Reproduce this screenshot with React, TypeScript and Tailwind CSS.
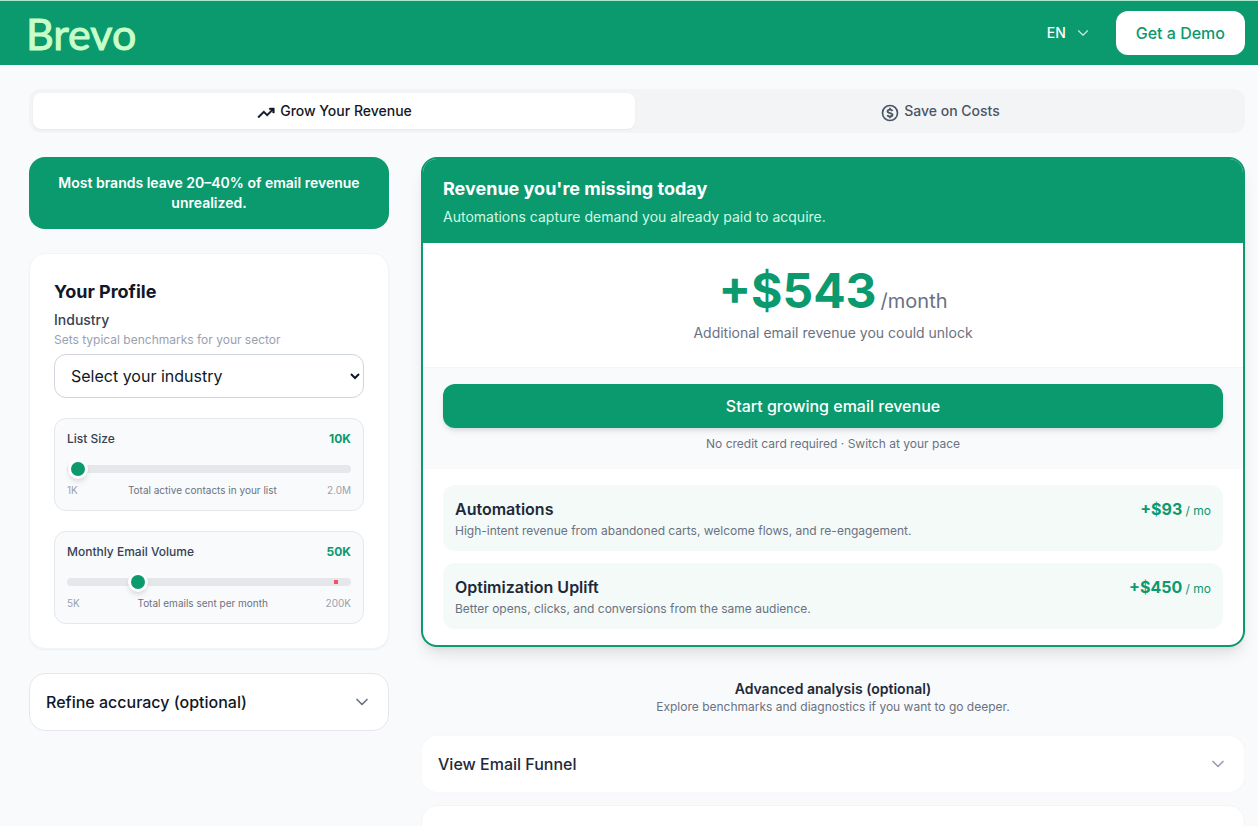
import React, { useState } from 'react';
import { ChevronDown } from 'lucide-react';

const TrendingUp = () => (
  <svg viewBox="0 0 24 24" fill="currentColor" stroke="currentColor" strokeWidth={0.5} aria-hidden="true" className="mt-1 h-5 w-5">
    <path d="M3.4 18 2 16.6l7.4-7.45 4 4L18.6 8H16V6h6v6h-2V9.4L13.4 16l-4-4Z" />
  </svg>
);

const DollarCoin = () => (
  <svg
    viewBox="0 0 24 24"
    fill="none"
    stroke="currentColor"
    strokeWidth={2}
    aria-hidden="true"
    className="mt-1 h-5 w-5"
  >
    <circle cx="12" cy="12" r="9" />
    <path
      strokeWidth={2.2}
      d="M12 5.8v2.4M12 15.8v2.4M15 9.8c-.4-1.1-1.5-1.8-3-1.8-1.7 0-2.9.8-2.9 2 0 1.300 1.100 1.700 2.900 2.100 1.900.4 3 .9 3 2.100 0 1.200-1.200 2-3 2-1.600 0-2.800-.7-3.100-1.900"
    />
  </svg>
);

type SliderProps = {
  id: string;
  label: string;
  hint: string;
  min: number;
  max: number;
  step: number;
  initial: number;
  minLabel: string;
  maxLabel: string;
  marker?: boolean;
};

const formatCount = (n: number) =>
  n >= 1000000 ? `${(n / 1000000).toFixed(1)}M` : `${Math.round(n / 1000)}K`;

const SliderField = ({ id, label, hint, min, max, step, initial, minLabel, maxLabel, marker }: SliderProps) => {
  const [value, setValue] = useState(initial);

  return (
    <div className="rounded-xl border border-gray-200 bg-[#f9fafb] p-3">
      <div className="flex items-center justify-between text-xs">
        <label htmlFor={id} className="font-medium text-gray-700">{label}</label>
        <span className="font-bold text-[#0b996e]">{formatCount(value)}</span>
      </div>
      <div className="relative mt-3 mb-1 flex h-5 items-center">
        <input
          id={id}
          type="range"
          min={min}
          max={max}
          step={step}
          value={value}
          onChange={(e) => setValue(Number(e.target.value))}
          className="h-2 w-full cursor-pointer appearance-none rounded-full bg-gray-200 outline-none [&::-webkit-slider-thumb]:h-5 [&::-webkit-slider-thumb]:w-5 [&::-webkit-slider-thumb]:appearance-none [&::-webkit-slider-thumb]:rounded-full [&::-webkit-slider-thumb]:border-3 [&::-webkit-slider-thumb]:border-white [&::-webkit-slider-thumb]:bg-[#0b996e] [&::-webkit-slider-thumb]:shadow-md"
        />
        {marker && <span className="absolute left-[94%] h-1 w-1 bg-red-500/80" />}
      </div>
      <div className="flex justify-between text-[10px] leading-[15px] text-gray-400">
        <span>{minLabel}</span>
        <span className="text-gray-500">{hint}</span>
        <span>{maxLabel}</span>
      </div>
    </div>
  );
};

const gains = [
  {
    title: 'Automations',
    description: 'High-intent revenue from abandoned carts, welcome flows, and re-engagement.',
    amount: '+$93'
  },
  {
    title: 'Optimization Uplift',
    description: 'Better opens, clicks, and conversions from the same audience.',
    amount: '+$450'
  }
];

const Header = () => (
  <header className="border-t border-[#a9e8cd] bg-[#0b996e]">
    <div className="flex h-16 items-center justify-between pr-[13px] pl-[26px]">
      <a
        href="#"
        className="font-['Lato',sans-serif] text-[43px] leading-none text-[#c8ffc8] [-webkit-text-stroke:1px_#c8ffc8]"
      >
        Brevo
      </a>
      <div className="flex items-center gap-6">
        <button type="button" className="flex items-center gap-2 text-sm font-medium text-white">
          EN
          <ChevronDown strokeWidth={1.5} className="h-[18px] w-[18px] opacity-80" />
        </button>
        <a href="#" className="rounded-xl bg-white px-5 py-[10px] font-medium text-[#0b996e]">
          Get a Demo
        </a>
      </div>
    </div>
  </header>
);

const Tabs = () => (
  <div role="tablist" className="grid grid-cols-2 gap-1 rounded-xl bg-gray-100 p-1 text-sm font-medium">
    <button
      type="button"
      role="tab"
      aria-selected="true"
      className="flex h-9 items-center justify-center gap-1 rounded-lg bg-white text-gray-900 shadow-xs"
    >
      <TrendingUp />
      Grow Your Revenue
    </button>
    <button
      type="button"
      role="tab"
      aria-selected="false"
      className="flex h-9 items-center justify-center gap-1 rounded-lg text-gray-600"
    >
      <DollarCoin />
      Save on Costs
    </button>
  </div>
);

const Profile = () => (
  <section className="rounded-2xl border border-gray-100 bg-white p-6 shadow-xs">
    <h2 className="text-lg font-bold text-gray-900">Your Profile</h2>
    <label htmlFor="industry" className="mt-1 block text-sm font-medium text-gray-700">
      Industry
    </label>
    <p className="text-xs leading-5 text-gray-400">Sets typical benchmarks for your sector</p>
    <select
      id="industry"
      className="mt-1 h-11 w-full rounded-xl border border-gray-300 bg-white px-3 text-base text-gray-900"
    >
      <option>Select your industry</option>
    </select>
    <div className="mt-5 flex flex-col gap-5">
      <SliderField
        id="list-size"
        label="List Size"
        hint="Total active contacts in your list"
        min={1000}
        max={2000000}
        step={1000}
        initial={10000}
        minLabel="1K"
        maxLabel="2.0M"
      />
      <SliderField
        id="volume"
        label="Monthly Email Volume"
        hint="Total emails sent per month"
        min={5000}
        max={200000}
        step={1000}
        initial={50000}
        minLabel="5K"
        maxLabel="200K"
        marker
      />
    </div>
  </section>
);

const Revenue = () => (
  <section className="overflow-hidden rounded-2xl border-2 border-[#0b996e] bg-white shadow-lg">
    <div className="bg-[#0b996e] px-5 py-4">
      <h2 className="text-lg font-bold text-white">Revenue you're missing today</h2>
      <p className="mt-1 text-sm text-emerald-100">Automations capture demand you already paid to acquire.</p>
    </div>
    <div className="px-5 py-6 text-center">
      <p className="text-5xl font-bold text-[#0b996e]">
        +$543
        <span className="ml-1 text-xl leading-none font-normal text-gray-500">/month</span>
      </p>
      <p className="mt-2 text-sm text-gray-500">Additional email revenue you could unlock</p>
    </div>
    <div className="border-y border-t-gray-100 border-b-[#f9fafb] bg-[#f9fafb] px-5 py-4 text-center">
      <button type="button" className="h-11 w-full rounded-xl bg-[#0b996e] font-medium text-white shadow-md">
        Start growing email revenue
      </button>
      <p className="mt-2 text-xs text-gray-500">No credit card required · Switch at your pace</p>
    </div>
    <div className="flex flex-col gap-3 px-5 py-4">
      {gains.map((gain) => (
        <div key={gain.title} className="flex items-start justify-between rounded-xl bg-[#f3faf8] p-3">
          <div>
            <h3 className="font-semibold text-gray-800">{gain.title}</h3>
            <p className="mt-[2px] text-xs text-gray-500">{gain.description}</p>
          </div>
          <p className="font-bold text-[#0b996e]">
            {gain.amount}
            <span className="text-xs font-normal"> / mo</span>
          </p>
        </div>
      ))}
    </div>
  </section>
);

const App = () => {
  return (
    <div className="h-screen overflow-hidden bg-[#f9fafb] font-['Inter',sans-serif]">
      <Header />
      <main className="pt-6 pr-[13px] pl-[29px]">
        <Tabs />
        <div className="mt-6 grid grid-cols-[360px_1fr] items-start gap-8">
          <div className="flex flex-col gap-6">
            <p className="rounded-2xl bg-[#0b996e] p-4 text-center text-sm font-semibold text-white">
              Most brands leave 20–40% of email revenue unrealized.
            </p>
            <Profile />
            <button
              type="button"
              className="flex items-center justify-between rounded-2xl border border-gray-200 bg-white p-4 font-medium text-gray-900"
            >
              Refine accuracy (optional)
              <ChevronDown className="h-5 w-5 text-gray-500" />
            </button>
          </div>

          <div>
            <Revenue />
            <div className="mt-8 text-center">
              <h2 className="text-sm font-semibold text-gray-800">Advanced analysis (optional)</h2>
              <p className="text-xs text-gray-500">Explore benchmarks and diagnostics if you want to go deeper.</p>
            </div>
            <div className="mt-5 flex flex-col gap-3">
              <button
                type="button"
                className="flex items-center justify-between rounded-2xl border border-gray-100/60 bg-white p-4 font-medium text-gray-800"
              >
                View Email Funnel
                <ChevronDown className="h-5 w-5 text-gray-400" />
              </button>
              <div className="h-14 rounded-2xl border border-gray-100 bg-white" />
            </div>
          </div>
        </div>
      </main>
    </div>
  );
};

export default App;
